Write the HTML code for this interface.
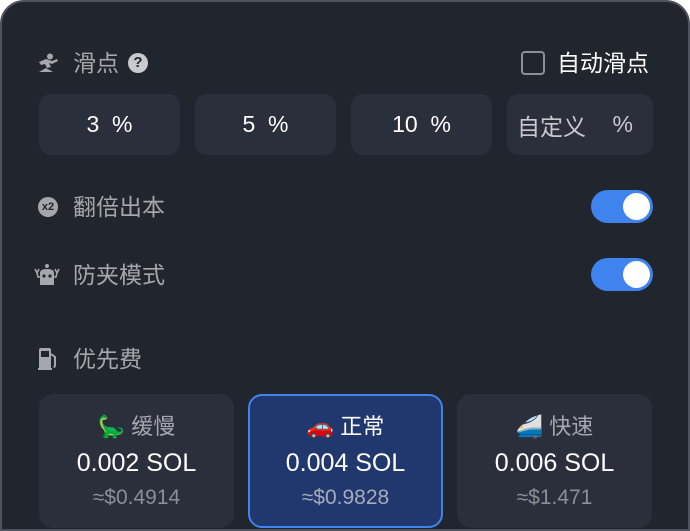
<!DOCTYPE html>
<html><head><meta charset="utf-8"><style>
*{margin:0;padding:0;box-sizing:border-box}
html,body{width:690px;height:531px;overflow:hidden}
body{background:#fff;font-family:"Liberation Sans","Noto Sans CJK SC",sans-serif;position:relative}
.panel{position:absolute;left:0;top:0;width:690px;height:531px;background:#21252e;border:2px solid #4e535d;border-radius:24px 24px 0 0}
.a{position:absolute}
.lbl{color:#a4a7ad;font-size:23px;line-height:26px}
.btn{position:absolute;top:94px;height:61px;background:#2a2f3b;border-radius:12px;color:#fff;font-size:23px;display:flex;align-items:center;justify-content:center}
.tog{position:absolute;left:591px;width:62px;height:33px;border-radius:17px;background:#3f83ef}
.tog::after{content:"";position:absolute;right:3px;top:3px;width:27px;height:27px;border-radius:50%;background:#fff}
.card{position:absolute;top:394px;height:134px;width:195px;background:#2a2f3b;border-radius:14px;text-align:center}
.card .t{margin-top:20px;color:#a4a7ad;font-size:22px;line-height:26px}
.card .v{margin-top:9px;color:#fff;font-size:25px;line-height:28px}
.card .u{margin-top:9px;color:#8b8f96;font-size:21px;line-height:24px}
</style></head><body>
<div class="panel"></div>
<svg class="a" style="left:37px;top:53px" width="22" height="20" viewBox="0 0 22 20"><circle cx="13" cy="3.5" r="3" fill="#a4a7ad"/><path d="M2 9 L9 6 L15 8 L20 6 L21 8 L15 11 L12 10 L14 14 L10 15 L8 11 L4 12Z" fill="#a4a7ad"/><path d="M2 19 L9 15 L16 19Z" fill="#a4a7ad"/></svg>
<div class="a lbl" style="left:73px;top:50px">滑点</div>
<div class="a" style="left:128px;top:53px;width:20px;height:20px;border-radius:50%;background:#c8cacd;color:#21252e;font-size:15px;font-weight:bold;text-align:center;line-height:20px">?</div>
<div class="a" style="left:521px;top:51px;width:24px;height:24px;border:2px solid #8b8f96;border-radius:4px"></div>
<div class="a" style="left:557px;top:50px;color:#fff;font-size:23px;line-height:26px">自动滑点</div>
<div class="btn" style="left:39px;width:141px">3&nbsp;&nbsp;%</div>
<div class="btn" style="left:195px;width:141px">5&nbsp;&nbsp;%</div>
<div class="btn" style="left:351px;width:141px">10&nbsp;&nbsp;%</div>
<div class="btn" style="left:507px;width:146px;justify-content:space-between;padding:0 20px 0 10px;color:#c8cacd"><span>自定义</span><span>%</span></div>
<div class="a" style="left:38px;top:197px;width:20px;height:20px;border-radius:50%;background:#a4a7ad;color:#21252e;font-size:11px;font-weight:bold;text-align:center;line-height:20px">x2</div>
<div class="a lbl" style="left:73px;top:194px">翻倍出本</div>
<div class="tog" style="top:190px"></div>
<svg class="a" style="left:33px;top:263px" width="28" height="24" viewBox="0 0 28 24"><circle cx="14" cy="3" r="2" fill="#a4a7ad"/><path d="M7 10 Q7 6 14 6 Q21 6 21 10 L21 22 L7 22Z" fill="#a4a7ad"/><circle cx="11" cy="13" r="1.6" fill="#21252e"/><circle cx="17" cy="13" r="1.6" fill="#21252e"/><path d="M2 6 L4 10 L6 6 M4 10 L5 14 L7 14 M26 6 L24 10 L22 6 M24 10 L23 14 L21 14" stroke="#a4a7ad" stroke-width="1.6" fill="none"/></svg>
<div class="a lbl" style="left:73px;top:262px">防夹模式</div>
<div class="tog" style="top:258px"></div>
<svg class="a" style="left:38px;top:348px" width="20" height="22" viewBox="0 0 20 22"><path d="M1 2 Q1 0 3 0 L11 0 Q13 0 13 2 L13 20 L14 20 L14 22 L0 22 L0 20 L1 20Z" fill="#a4a7ad"/><rect x="3" y="3" width="8" height="6" fill="#21252e"/><path d="M13 6 L17 9 L17 17 Q17 19 15.5 19" stroke="#a4a7ad" stroke-width="2" fill="none"/></svg>
<div class="a lbl" style="left:73px;top:346px">优先费</div>
<div class="card" style="left:39px"><div class="t">🦕 缓慢</div><div class="v">0.002 SOL</div><div class="u">≈$0.4914</div></div>
<div class="card" style="left:248px;background:#21386e;border:2px solid #3f83ef"><div class="t" style="color:#fff;margin-top:18px">🚗 正常</div><div class="v">0.004 SOL</div><div class="u" style="color:#a4abbb">≈$0.9828</div></div>
<div class="card" style="left:457px"><div class="t">🚄 快速</div><div class="v">0.006 SOL</div><div class="u">≈$1.471</div></div>
</body></html>
